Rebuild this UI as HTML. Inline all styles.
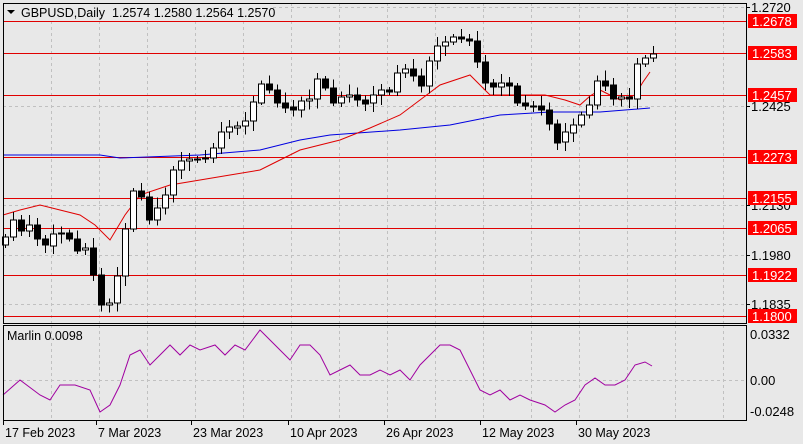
<!DOCTYPE html><html><head><style>
body{margin:0;width:803px;height:444px;background:#e8e8e8;overflow:hidden;font-family:"Liberation Sans",sans-serif}
</style></head><body>
<svg id="s" width="803" height="444" xmlns="http://www.w3.org/2000/svg" style="position:absolute;left:0;top:0" font-family="Liberation Sans, sans-serif"></svg>
<script>
(function(){
var s=document.getElementById('s'),h='';
function L(x1,y1,x2,y2,c,w,d){h+='<line x1="'+x1+'" y1="'+y1+'" x2="'+x2+'" y2="'+y2+'" stroke="'+c+'" stroke-width="'+(w||1)+'"'+(d?' stroke-dasharray="'+d+'"':'')+' shape-rendering="crispEdges"/>';}
function T(x,y,t,c,sz,a){h+='<text x="'+x+'" y="'+y+'" fill="'+c+'" font-size="'+(sz||12.5)+'"'+(a?' text-anchor="'+a+'"':'')+'>'+t+'</text>';}
for(var x=51;x<746;x+=48){L(x+.5,3,x+.5,323,'#c0c0c0',1,'3,3');L(x+.5,325,x+.5,420,'#c0c0c0',1,'3,3');}
[7,106,205,255,304].forEach(function(y){L(3,y+.5,746,y+.5,'#c0c0c0',1,'3,3')});
L(3,380.5,746,380.5,'#c0c0c0',1,'3,3');
var lv=[[21,'1.2678'],[53,'1.2583'],[95,'1.2457'],[157,'1.2273'],[198,'1.2155'],[228,'1.2065'],[275,'1.1922'],[316,'1.1800']];
lv.forEach(function(v){L(3,v[0]+.5,746,v[0]+.5,'#e00000',1)});
function interp(p,x){if(x<=p[0][0])return p[0][1];for(var i=1;i<p.length;i++){if(x<=p[i][0]){var a=p[i-1],b=p[i],t=(x-a[0])/(b[0]-a[0]);return a[1]+(b[1]-a[1])*t;}}return p[p.length-1][1];}
function poly(p,c){var d='';p.forEach(function(q){d+=q[0]+','+q[1]+' '});h+='<polyline points="'+d+'" fill="none" stroke="'+c+'" stroke-width="1"/>';}
var blue=[[3,155],[100,155],[120,158],[200,155],[260,150],[300,140],[330,135],[400,130],[450,125],[500,115],[550,112],[600,112],[650,108]];
var red=[[3,215],[20,210],[40,205],[60,210],[80,215],[95,225],[110,240],[125,215],[140,195],[170,185],[200,180],[230,175],[260,170],[280,160],[300,150],[340,140],[370,128],[400,115],[420,100],[440,85],[470,75],[480,85],[490,95],[520,95],[545,95],[565,100],[580,105],[590,96],[600,90],[610,95],[620,100],[635,95],[643,82],[650,72]];
poly(blue,'#0000e0');poly(red,'#e00000');
var cl=[[5,240],[10,215],[20,235],[25,210],[35,240],[45,245],[50,230],[60,235],[70,240],[75,250],[85,245],[100,305],[110,300],[120,270],[130,190],[140,190],[150,225],[160,200],[170,185],[175,165],[185,160],[195,155],[205,160],[215,145],[220,130],[230,130],[240,125],[245,120],[250,105],[260,85],[270,90],[280,105],[290,115],[300,100],[310,95],[320,75],[330,100],[340,100],[350,95],[360,100],[370,100],[380,90],[390,90],[400,70],[410,70],[420,85],[430,60],[440,40],[450,40],[460,40],[470,40],[475,45],[480,80],[490,90],[500,80],[510,90],[520,110],[530,100],[540,110],[550,125],[555,140],[560,140],[570,130],[580,115],[590,100],[600,75],[610,95],[620,100],[630,100],[635,65],[645,55],[652,56]];
var prev=interp(cl,5)+5;
for(var x=5,i=0;x<=653;x+=8,i++){var c=interp(cl,x)+((i*37)%7-3),o=prev;var tp=Math.min(o,c),bt=Math.max(o,c);if(bt-tp<1)bt=tp+1;
var hi=tp-3-(i*13)%8,lo=bt+3+(i*17)%8;
L(x+.5,hi,x+.5,lo,'#000',1);
h+='<rect x="'+(x-2.5)+'" y="'+tp.toFixed(0)+'" width="6" height="'+(bt-tp).toFixed(0)+'" fill="'+(c<o?'#fff':'#000')+'" stroke="#000" stroke-width="1" shape-rendering="crispEdges"/>';prev=c;}
var m=[[3,395],[20,380],[40,395],[50,400],[60,385],[75,385],[90,390],[100,412],[110,405],[120,385],[130,355],[140,350],[150,365],[160,355],[170,345],[180,355],[190,345],[200,350],[215,345],[225,355],[235,345],[245,350],[260,330],[270,340],[280,350],[290,360],[300,345],[310,345],[320,355],[330,375],[340,370],[350,365],[360,375],[370,375],[380,370],[390,375],[400,370],[410,380],[420,365],[430,355],[440,345],[450,345],[460,350],[470,370],[480,390],[490,395],[500,390],[510,400],[520,395],[530,400],[545,405],[555,412],[565,405],[575,400],[585,385],[595,378],[605,385],[615,385],[625,380],[635,365],[645,362],[652,366]];
poly(m,'#a000a0');
h+='<rect x="3.5" y="3.5" width="743" height="320" fill="none" stroke="#000"/>';
h+='<rect x="3.5" y="325.5" width="743" height="95" fill="none" stroke="#000"/>';
[[7,'1.2720'],[106,'1.2425'],[205,'1.2130'],[255,'1.1980'],[304,'1.1835']].forEach(function(v){L(746,v[0]+.5,750,v[0]+.5,'#000');T(751,v[0]+5,v[1],'#000',13)});
lv.forEach(function(v){h+='<rect x="748" y="'+(v[0]-7)+'" width="49" height="14" fill="#ff0000"/>';T(752,v[0]+5,v[1],'#fff',13)});
[[334,'0.0332'],[380,'0.00'],[411,'-0.0248']].forEach(function(v){T(750,v[0]+5,v[1],'#000',13)});
[[5,'17 Feb 2023'],[98,'7 Mar 2023'],[193,'23 Mar 2023'],[290,'10 Apr 2023'],[386,'26 Apr 2023'],[482,'12 May 2023'],[578,'30 May 2023']].forEach(function(v){L(v[0]-1.5,421,v[0]-1.5,425,'#000');T(v[0],437,v[1],'#000',12.5)});
h+='<rect x="4" y="4" width="268" height="15" fill="#e8e8e8"/>';
h+='<polygon points="7,10 15,10 11,14" fill="#000"/>';
T(21,17,'GBPUSD,Daily&#160; 1.2574 1.2580 1.2564 1.2570','#000',12.5);
T(7,340,'Marlin 0.0098','#000',12.5);
s.innerHTML=h;
})();
</script>
</body></html>
